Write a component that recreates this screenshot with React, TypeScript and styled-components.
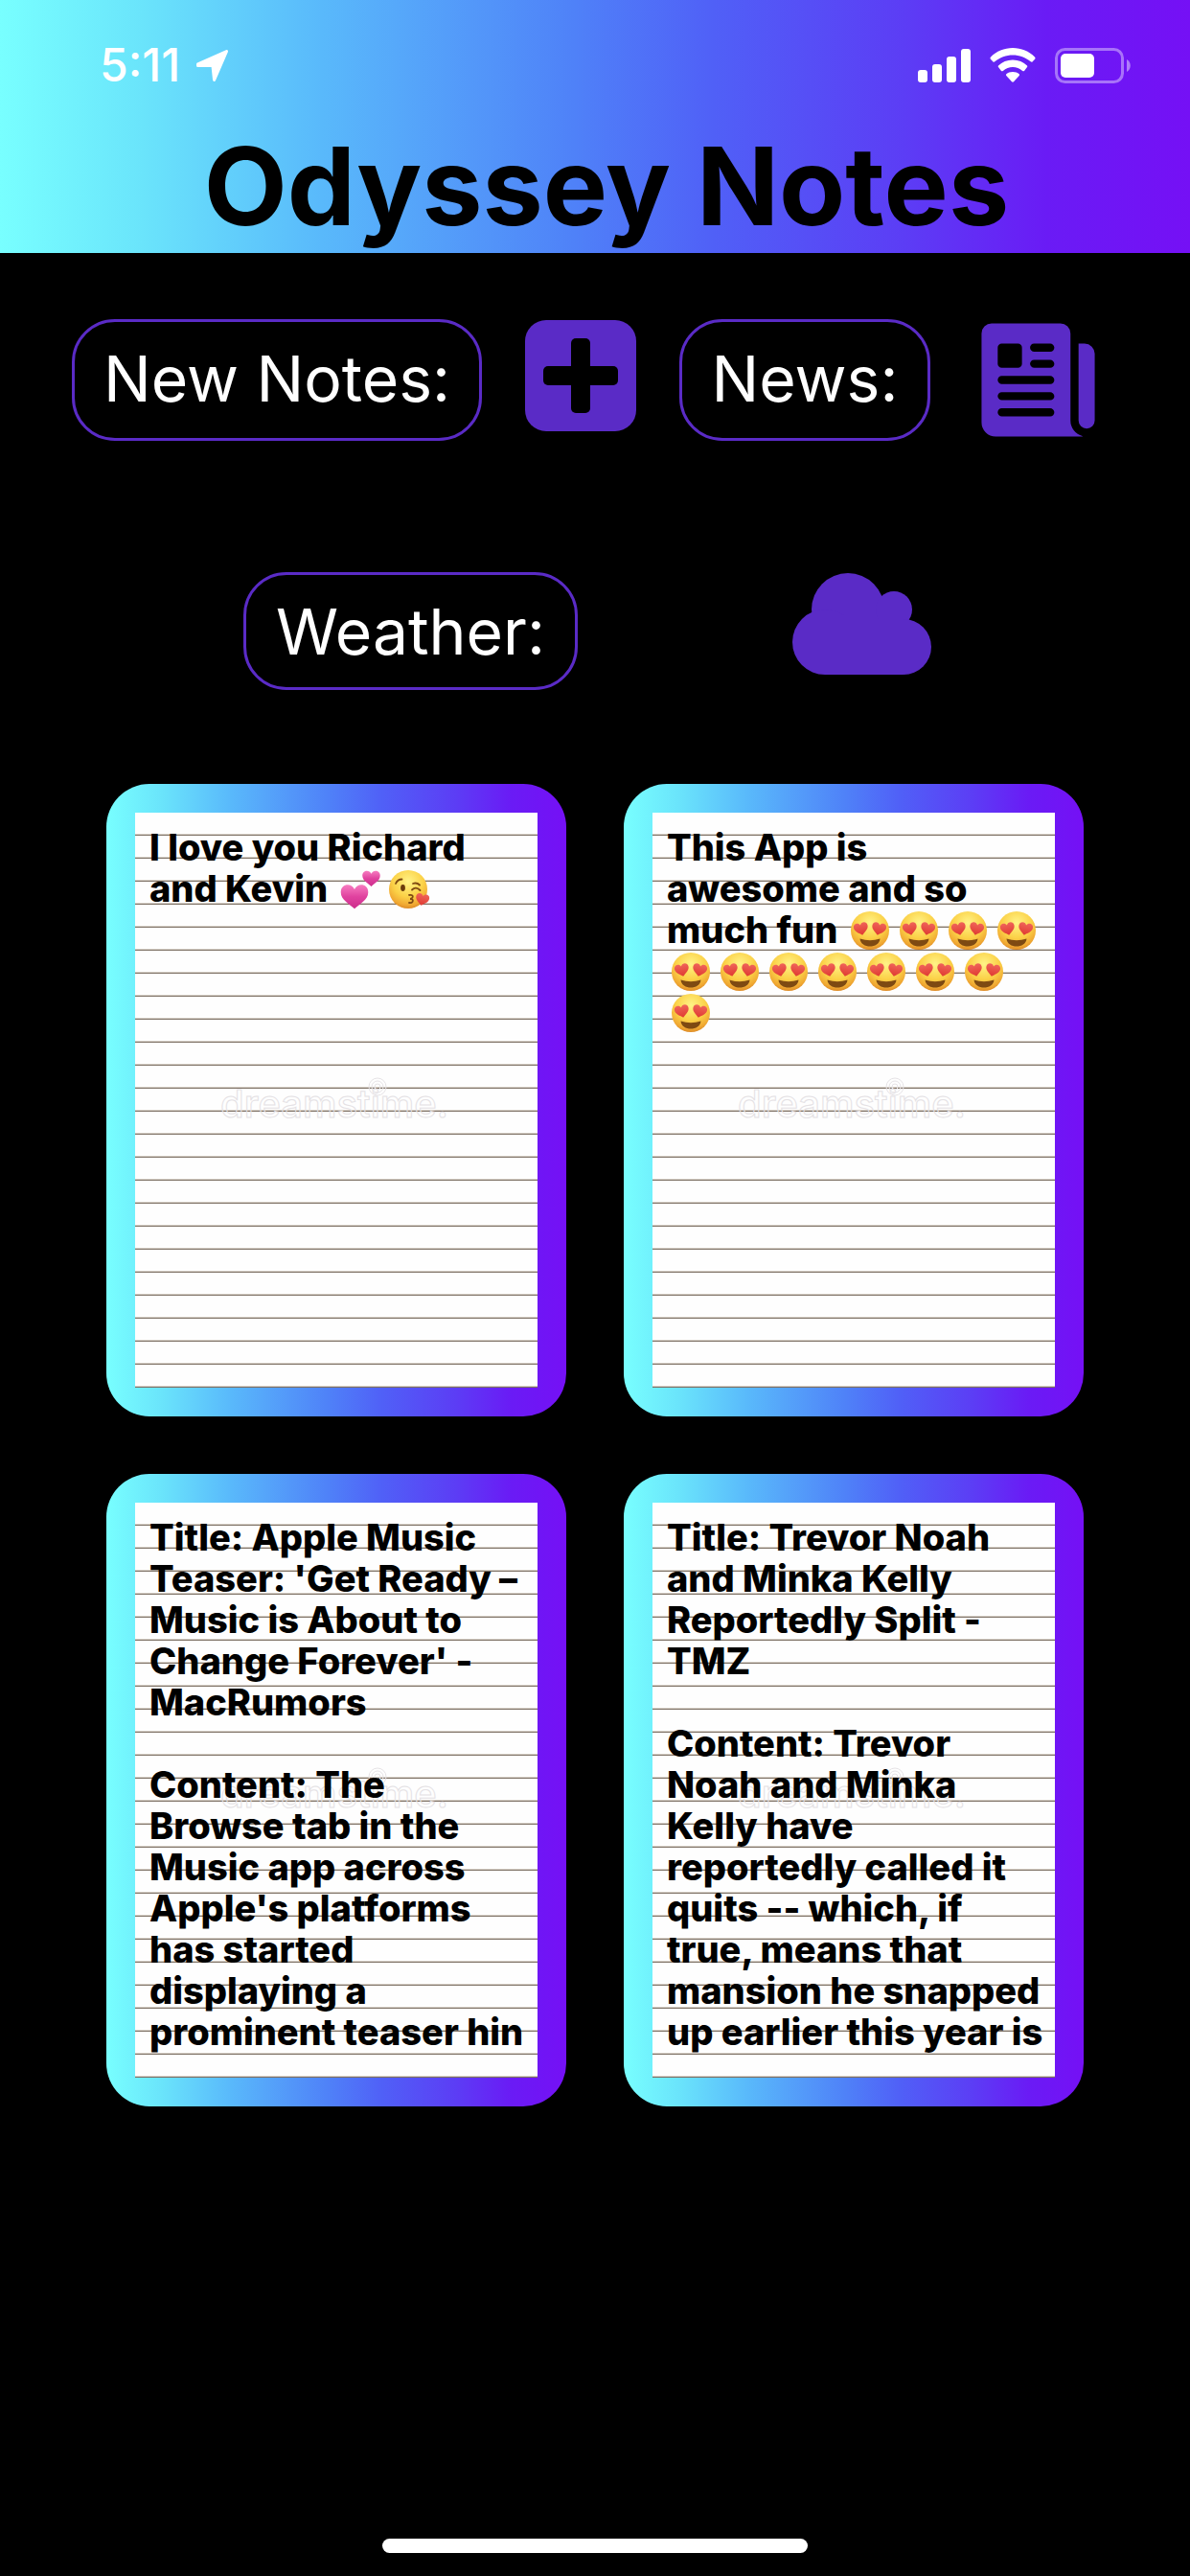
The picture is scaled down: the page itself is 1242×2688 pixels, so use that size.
import React from "react";
import styled, { createGlobalStyle } from "styled-components";
import { IoNewspaper } from "react-icons/io5";

const purple = "#5a2bc6";
const spectrum =
  "linear-gradient(90deg, #78ffff 0%, #6ae4fb 12%, #59b9fb 27%, #4f82f8 48%, #5060f7 60%, #5c3df5 76%, #6a1bf5 88%, #7510f5 100%)";

const GlobalStyle = createGlobalStyle`
  * { box-sizing: border-box; }
  body {
    margin: 0;
    background: #000;
    font-family: Inter, "Liberation Sans", sans-serif;
  }
`;

const Screen = styled.div`
  min-height: 100vh;
  display: flex;
  flex-direction: column;
  background: #000;
`;

const Header = styled.header`
  height: 264px;
  display: flex;
  flex-direction: column;
  background: ${spectrum};
`;

const StatusBar = styled.div`
  height: 136px;
  padding: 0 62px 0 104px;
  display: flex;
  align-items: center;
  justify-content: space-between;
  color: #fff;
`;

const StatusGroup = styled.div<{ $gap: number }>`
  display: flex;
  align-items: center;
  gap: ${(p) => p.$gap}px;
`;

const Clock = styled.time`
  font-size: 48px;
  line-height: 56px;
  font-weight: 500;
`;

const Title = styled.h1`
  margin: 0;
  padding-left: 24px;
  text-align: center;
  font-size: 113px;
  line-height: 116px;
  font-weight: 700;
  color: #000;
`;

const Toolbar = styled.nav<{ $gap: number; $top: number }>`
  display: flex;
  justify-content: center;
  align-items: flex-start;
  gap: ${(p) => p.$gap}px;
  padding: ${(p) => p.$top}px 16px 0 0;
`;

const Label = styled.label<{ $width: number; $height: number }>`
  width: ${(p) => p.$width}px;
  height: ${(p) => p.$height}px;
  padding-top: 15px;
  border: 3px solid ${purple};
  border-radius: 45px;
  color: #fff;
  font-size: 66px;
  line-height: 88px;
  text-align: center;
  white-space: nowrap;
`;

const IconButton = styled.button`
  display: flex;
  padding: 0;
  border: 0;
  background: none;
  color: ${purple};
  cursor: pointer;
`;

const NewsIcon = styled(IoNewspaper)`
  width: 135px;
  height: 135px;
  margin: -4px 0;
`;

const Notes = styled.main`
  display: grid;
  grid-template-columns: repeat(2, minmax(0, 480px));
  justify-content: center;
  gap: 60px;
  padding: 98px 0 60px;
`;

const Card = styled.article`
  height: 660px;
  padding: 30px;
  border-radius: 45px;
  background: ${spectrum};
`;

const Paper = styled.div`
  position: relative;
  height: 600px;
  padding: 15px;
  background: repeating-linear-gradient(
    180deg,
    #fefefe 0 22px,
    #d9d2ca 22px 23px,
    #7d7064 23px 24px
  );
`;

const Watermark = styled.div`
  position: absolute;
  left: 89px;
  top: 280px;
  font-size: 40px;
  line-height: 48px;
  font-weight: 500;
  color: transparent;
  -webkit-text-stroke: 1px #e4e1e4;
`;

const Swirl = styled.svg`
  position: absolute;
  left: 154px;
  top: -4px;
`;

const NoteText = styled.p`
  position: relative;
  margin: 0;
  white-space: pre;
  font-size: 38px;
  line-height: 43px;
  font-weight: 800;
  color: #000;
`;

const EmojiArt = styled.svg`
  width: 51px;
  height: 43px;
  vertical-align: top;
`;

const HomeIndicator = styled.div`
  width: 444px;
  height: 15px;
  margin: auto auto 24px;
  border-radius: 8px;
  background: #fff;
`;

const LocationIcon = () => (
  <svg width="33" height="33" viewBox="0 0 32 32" fill="#fff" stroke="#fff" strokeWidth="3" strokeLinejoin="round">
    <path d="M1.500 14.500L30.500 1.500L18 30.500L16.500 16H1.500z" />
  </svg>
);

const SignalIcon = () => (
  <svg width="55" height="35" viewBox="0 0 55 35" fill="#fff">
    <rect x="0" y="22" width="10" height="13" rx="3" />
    <rect x="15" y="16" width="10" height="19" rx="3" />
    <rect x="30" y="8" width="10" height="27" rx="3" />
    <rect x="45" y="0" width="10" height="35" rx="3" />
  </svg>
);

const WifiIcon = () => (
  <svg width="48" height="36" viewBox="0 0 48 36" fill="#fff">
    <path d="M24 0C33 0 41 3.500 47 9.500Q48 10.500 47.300 11.500L44.500 14.500Q43.500 15 42.700 14.200C37.500 10 31 7.500 24 7.500S10.500 10 5.300 14.200Q4.500 15 3.500 14.500L.700 11.500Q0 10.500 1 9.500C7 3.500 15 0 24 0z" />
    <path d="M24 12.500c6 0 11 2.300 15 6q.700.800 0 1.600l-3 3.800q-.900.800-1.800 0c-3-2.600-6.500-3.900-10.200-3.900s-7.200 1.300-10.200 3.900q-.900.800-1.800 0l-3-3.800q-.700-.800 0-1.600c4-3.700 9-6 15-6z" />
    <path d="M24 25c2.800 0 5 .900 6.700 2.300q.700.800 0 1.600L25 35.200q-1 .900-2 0l-5.700-6.300q-.700-.800 0-1.600C19 25.900 21.200 25 24 25z" />
  </svg>
);

const BatteryIcon = () => (
  <svg width="79" height="37" viewBox="0 0 79 37" fill="none">
    <rect x="1.500" y="1.500" width="69" height="34" rx="9" stroke="#fff" strokeOpacity=".4" strokeWidth="3" />
    <rect x="6" y="6" width="35" height="25" rx="5" fill="#fff" />
    <path d="M75 12c5 2.500 5 10.500 0 13z" fill="#fff" fillOpacity=".45" />
  </svg>
);

const PlusIcon = () => (
  <svg width="116" height="118" viewBox="0 -1 116 118">
    <rect width="116" height="116" rx="22" fill="currentColor" />
    <rect x="48" y="19" width="20" height="78" rx="5" fill="#000" />
    <rect x="19" y="48" width="78" height="20" rx="5" fill="#000" />
  </svg>
);

const CloudIcon = () => (
  <svg width="145" height="107" viewBox="0 -1 145 107" fill="currentColor">
    <circle cx="58" cy="38" r="38" />
    <circle cx="106" cy="38" r="19" />
    <circle cx="34" cy="72" r="34" />
    <circle cx="116" cy="77" r="29" />
    <path d="M34 48h81v58H34z" />
  </svg>
);

const GradientDefs = styled.svg`
  position: absolute;
  width: 0;
  height: 0;
`;

const Gradients = () => (
  <GradientDefs aria-hidden="true">
    <defs>
      <radialGradient id="face" cx=".5" cy=".3" r=".72">
        <stop offset="0" stopColor="#fff387" />
        <stop offset=".55" stopColor="#fbd147" />
        <stop offset=".85" stopColor="#f0a832" />
        <stop offset="1" stopColor="#d98524" />
      </radialGradient>
      <linearGradient id="pink" x1="0" y1="0" x2="0" y2="1">
        <stop offset="0" stopColor="#f77cc0" />
        <stop offset=".5" stopColor="#e0429f" />
        <stop offset="1" stopColor="#cd2d8c" />
      </linearGradient>
      <linearGradient id="red" x1="0" y1="0" x2="0" y2="1">
        <stop offset="0" stopColor="#f0645a" />
        <stop offset="1" stopColor="#df3a31" />
      </linearGradient>
    </defs>
  </GradientDefs>
);

const heart = "M0 -5C-3 -12 -14 -11 -14 -2C-14 6 -5 10 0 15C5 10 14 6 14 -2C14 -11 3 -12 0 -5z";

const HeartEyes = () => (
  <EmojiArt viewBox="0 0 51 43" role="img" aria-label="😍">
    <circle cx="25" cy="22" r="20" fill="url(#face)" />
    <path d="M14.500 30.500Q25 34 35.500 30.500C35 36 30 38.500 25 38.500S15 36 14.500 30.500z" fill="#7e4a12" />
    <path d={heart} transform="translate(15.500 19) rotate(-12) scale(.53)" fill="url(#red)" />
    <path d={heart} transform="translate(34.500 19) rotate(12) scale(.53)" fill="url(#red)" />
  </EmojiArt>
);

const KissFace = () => (
  <EmojiArt viewBox="0 0 51 43" role="img" aria-label="😘">
    <circle cx="25" cy="22" r="20" fill="url(#face)" />
    <g fill="none" stroke="#7e4a12" strokeWidth="1.800" strokeLinecap="round">
      <path d="M12 16Q14 11.500 18.500 11.500" />
      <path d="M30 16Q34 14.500 37 17.500" />
      <path d="M29 22.500Q33 18.500 37.500 23" />
      <path d="M26 28Q31 27.500 29.500 30.500Q28.500 32 27 32Q31 32 29.500 35Q28.500 36.500 26 36" />
    </g>
    <ellipse cx="19.500" cy="20.500" rx="2.400" ry="3.400" fill="#6a3c0c" />
    <path d={heart} transform="translate(40 31.500) rotate(12) scale(.5)" fill="url(#red)" />
  </EmojiArt>
);

const TwoHearts = () => (
  <EmojiArt viewBox="0 0 51 43" role="img" aria-label="💕">
    <path d={heart} transform="translate(20 27) scale(1.020)" fill="url(#pink)" />
    <path d={heart} transform="translate(37.500 9) scale(.660)" fill="url(#pink)" />
  </EmojiArt>
);

const Note = ({ children }: { children: React.ReactNode }) => (
  <Card>
    <Paper>
      <Watermark aria-hidden="true">
        dreamstime.
        <Swirl width="20" height="20" viewBox="0 0 20 20" fill="none" stroke="#e6e3e6" strokeWidth="1">
          <circle cx="10" cy="10" r="9" />
          <circle cx="10" cy="10" r="6" />
          <circle cx="10" cy="10" r="3" />
        </Swirl>
      </Watermark>
      <NoteText>{children}</NoteText>
    </Paper>
  </Card>
);

const eyes = (count: number) => Array.from({ length: count }, (_, i) => <HeartEyes key={i} />);

const musicNote = `Title: Apple Music
Teaser: 'Get Ready –
Music is About to
Change Forever' -
MacRumors

Content: The
Browse tab in the
Music app across
Apple's platforms
has started
displaying a
prominent teaser hin`;

const splitNote = `Title: Trevor Noah
and Minka Kelly
Reportedly Split -
TMZ

Content: Trevor
Noah and Minka
Kelly have
reportedly called it
quits -- which, if
true, means that
mansion he snapped
up earlier this year is`;

export default function App() {
  return (
    <Screen>
      <GlobalStyle />
      <Gradients />
      <Header>
        <StatusBar>
          <StatusGroup $gap={17}>
            <Clock>5:11</Clock>
            <LocationIcon />
          </StatusGroup>
          <StatusGroup $gap={20}>
            <SignalIcon />
            <WifiIcon />
            <BatteryIcon />
          </StatusGroup>
        </StatusBar>
        <Title>Odyssey Notes</Title>
      </Header>

      <Toolbar $gap={45} $top={69}>
        <Label htmlFor="new-note" $width={428} $height={127}>New Notes:</Label>
        <IconButton id="new-note" type="button">
          <PlusIcon />
        </IconButton>
        <Label htmlFor="news" $width={262} $height={127}>News:</Label>
        <IconButton id="news" type="button">
          <NewsIcon />
        </IconButton>
      </Toolbar>
      <Toolbar $gap={224} $top={137}>
        <Label htmlFor="weather" $width={349} $height={123}>Weather:</Label>
        <IconButton id="weather" type="button">
          <CloudIcon />
        </IconButton>
      </Toolbar>

      <Notes>
        <Note>
          {"I love you Richard\nand Kevin "}
          <TwoHearts />
          <KissFace />
        </Note>
        <Note>
          {"This App is\nawesome and so\nmuch fun "}
          {eyes(4)}
          {"\n"}
          {eyes(7)}
          {"\n"}
          {eyes(1)}
        </Note>
        <Note>{musicNote}</Note>
        <Note>{splitNote}</Note>
      </Notes>

      <HomeIndicator />
    </Screen>
  );
}
